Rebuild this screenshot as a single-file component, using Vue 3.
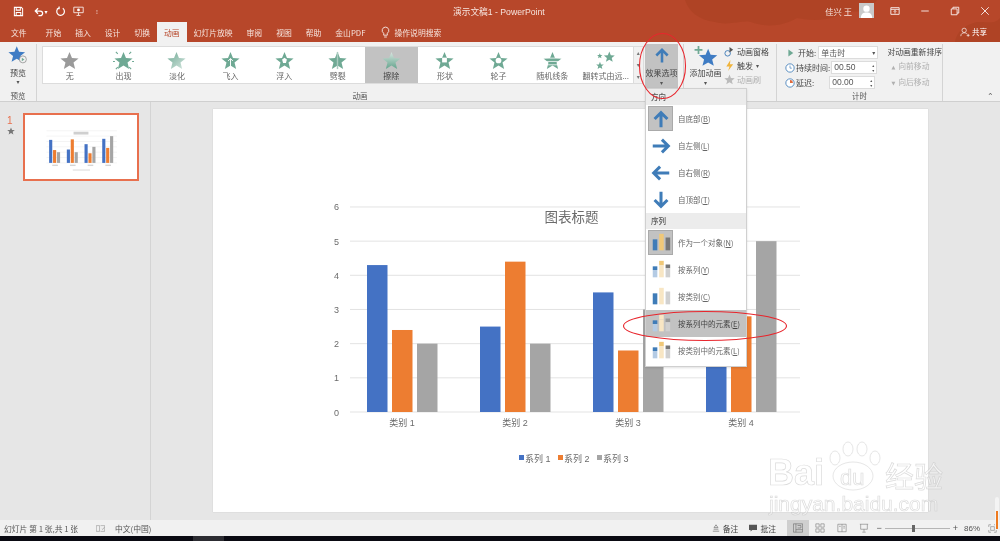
<script setup>
const starPts = '10,1 12.6,7.3 19.5,7.8 14.2,12.1 15.9,18.8 10,15.2 4.1,18.8 5.8,12.1 .5,7.8 7.4,7.3'

const tabs = ['文件', '开始', '插入', '设计', '切换', '动画', '幻灯片放映', '审阅', '视图', '帮助', '金山PDF']

const effects = [
  { name: '无', kind: 'none' },
  { name: '出现', kind: 'appear' },
  { name: '淡化', kind: 'fade' },
  { name: '飞入', kind: 'fly' },
  { name: '浮入', kind: 'float' },
  { name: '劈裂', kind: 'split' },
  { name: '擦除', kind: 'wipe', active: true },
  { name: '形状', kind: 'shape' },
  { name: '轮子', kind: 'wheel' },
  { name: '随机线条', kind: 'lines' },
  { name: '翻转式由远...', kind: 'flip' }
]

const directions = [
  { label: '自底部', key: 'B', path: 'M12 21V5M5 12l7-7 7 7', active: true },
  { label: '自左侧', key: 'L', path: 'M3 12h17M13 5l7 7-7 7' },
  { label: '自右侧', key: 'R', path: 'M21 12H4M11 5l-7 7 7 7' },
  { label: '自顶部', key: 'T', path: 'M12 3v16M5 12l7 7 7-7' }
]

const sequences = [
  { label: '作为一个对象', key: 'N', type: 'whole', active: true },
  { label: '按系列', key: 'Y', type: 'series' },
  { label: '按类别', key: 'C', type: 'category' },
  { label: '按系列中的元素', key: 'E', type: 'series', hover: true },
  { label: '按类别中的元素', key: 'L', type: 'series' }
]

// 图表数据
const colors = ['#4472c4', '#ed7d31', '#a5a5a5']
const series = [
  [4.3, 2.4, 2],
  [2.5, 4.4, 2],
  [3.5, 1.8, 3],
  [4.5, 2.8, 5]
]
const unit = 34.17
const baseY = 303
const grid = [0, 1, 2, 3, 4, 5, 6]

const groupX = (i) => 154 + i * 113
const barX = (i, j) => groupX(i) + j * 25
</script>

<template>
  <div class="app">
    <header class="title-bar">
      <svg class="pattern" viewBox="0 0 400 42" preserveAspectRatio="none">
        <path d="M85 0c4 12 14 20 30 22 14 4 26-2 36 0 16 6 32 4 46-4 20 4 38 2 50-8 12 4 24 0 30-10zM355 42c2-12 14-20 26-20 8 0 14 2 19-4v24z" fill="#a8401f" opacity=".5" />
      </svg>
      <div class="quick">
        <svg viewBox="0 0 12 12"><path d="M1.5 1.5h7.5l1.5 1.5v7.5h-9zM3.5 1.5v3h4.5v-3M3.5 10.5V7h5v3.5" fill="none" stroke="#fff" stroke-width="1.1" /></svg>
        <svg class="q-undo" viewBox="0 0 12 12"><path d="M3 5.5h5a2.5 2.5 0 0 1 0 5H6M5.500 2.500 2.500 5.500l3 3" fill="none" stroke="#fff" stroke-width="1.400" /></svg>
        <span class="caret q-caret">▾</span>
        <svg class="q-redo" viewBox="0 0 12 12"><path d="M8.500 2.500a4.200 4.200 0 1 1-4.500-.2M4.500 .5v2.500H2" fill="none" stroke="#fff" stroke-width="1.300" /></svg>
        <svg class="q-show" viewBox="0 0 14 14"><path d="M1 1.500h12v7H1zM7 8.500v3M4.500 12h5" fill="none" stroke="#fff" /><circle cx="7" cy="5" r="1.800" fill="#fff" /></svg>
        <span class="caret q-more">⁝</span>
      </div>
      <div class="doc-title">演示文稿1 - PowerPoint</div>
      <div class="win-right">
        <span class="user">佳兴 王</span>
        <span class="avatar">
          <svg viewBox="0 0 16 16"><circle cx="8" cy="6" r="3.400" fill="#fff" /><path d="M2 16c0-5 3-6 6-6s6 1 6 6z" fill="#fff" /></svg>
        </span>
        <div class="win-btns">
          <svg viewBox="0 0 12 12"><path d="M1 2h10v8H1zM1 4h10" fill="none" stroke="#fff" /><path d="M6 9V5.500M4.500 6.800 6 5.300l1.500 1.500" fill="none" stroke="#fff" /></svg>
          <svg viewBox="0 0 12 12"><path d="M1.500 6h9" stroke="#fff" /></svg>
          <svg viewBox="0 0 12 12"><path d="M1.500 3.500h7v7h-7zM3.500 3.500v-2h7v7h-2" fill="none" stroke="#fff" /></svg>
          <svg viewBox="0 0 12 12"><path d="M1.500 1.500l9 9M10.500 1.500l-9 9" stroke="#fff" /></svg>
        </div>
      </div>
    </header>

    <nav class="tab-bar">
      <span
        v-for="(tab, i) in tabs"
        :key="tab"
        class="tab"
        :class="{ active: tab === '动画', first: i === 0 }"
      >{{ tab }}</span>
      <span class="search">
        <svg viewBox="0 0 10 14"><path d="M5 1a3.700 3.700 0 0 0-2 6.800V10h4V7.800A3.700 3.700 0 0 0 5 1zM3.500 12h3" fill="none" stroke="#fff" stroke-width=".9" /></svg>
        操作说明搜索
      </span>
      <span class="share">
        <svg viewBox="0 0 12 12"><circle cx="5" cy="4" r="2.600" fill="none" stroke="#fff" stroke-width=".8" /><path d="M1 11c0-3 2-4 4-4s3 .5 3.500 1.500M8 10h3.500M9.800 8.300V11.700" fill="none" stroke="#fff" stroke-width=".8" /></svg>
        共享
      </span>
    </nav>

    <section class="ribbon">
      <svg width="0" height="0" class="defs">
        <defs>
          <linearGradient id="fadeGrad" x1="0" y1="0" x2="1" y2="1">
            <stop offset="0" stop-color="#6fa994" />
            <stop offset="1" stop-color="#d4e6df" />
          </linearGradient>
          <linearGradient id="wipeGrad" x1="0" y1="0" x2="0" y2="1">
            <stop offset="0" stop-color="#d8e6e0" />
            <stop offset="1" stop-color="#64a48d" />
          </linearGradient>
        </defs>
      </svg>

      <div class="group preview-group">
        <div class="group-body preview-btn">
          <svg viewBox="0 0 24 22" class="preview-star">
            <polygon :points="starPts" fill="#3f7cc4" />
            <circle cx="17" cy="16" r="4" fill="#f1f1f1" stroke="#777" stroke-width=".7" />
            <path d="M15.800 14v4l3-2z" fill="#6fa994" />
          </svg>
          <span>预览</span>
          <span class="caret dark">▾</span>
        </div>
        <div class="group-label">预览</div>
      </div>

      <div class="group anim-group">
        <div class="group-body anim-body">
          <div class="gallery">
            <div
              v-for="item in effects"
              :key="item.name"
              class="effect"
              :class="{ active: item.active }"
            >
              <svg viewBox="0 0 22 22">
                <polygon v-if="item.kind === 'none'" :points="starPts" fill="#9a9a9a" transform="translate(1 1)" />
                <polygon v-else-if="item.kind === 'fade'" :points="starPts" fill="url(#fadeGrad)" transform="translate(1 1)" />
                <polygon v-else-if="item.kind === 'wipe'" :points="starPts" fill="url(#wipeGrad)" transform="translate(1 1)" />
                <polygon v-else-if="item.kind !== 'flip'" :points="starPts" fill="#6fa994" transform="translate(1 1)" />

                <path v-if="item.kind === 'appear'" d="M3 2l2 2M19 2l-2 2M0 12h2M20 12h2M3 20l2-2M19 20l-2-2" stroke="#6fa994" stroke-width="1.200" />
                <path v-if="item.kind === 'fly'" d="M11 17V9M8.500 11.500 11 9l2.500 2.500M8 19h6" stroke="#fff" fill="none" />
                <polygon v-if="item.kind === 'float'" points="11,8 13.500,10 12.500,13.500 9.500,13.500 8.500,10" fill="#fff" />
                <path v-if="item.kind === 'split'" d="M11 2v18" stroke="#a9cbbf" stroke-width="1.500" />
                <rect v-if="item.kind === 'shape'" x="8.500" y="8" width="5" height="5" fill="#fff" />
                <circle v-if="item.kind === 'wheel'" cx="11" cy="11" r="3" fill="#fff" />
                <path v-if="item.kind === 'lines'" d="M0 8.500h22M0 12h22M0 15.500h22" stroke="#fff" stroke-width=".8" />
                <g v-if="item.kind === 'flip'" fill="#6fa994">
                  <polygon :points="starPts" transform="translate(9 1) scale(.6)" />
                  <polygon :points="starPts" transform="translate(1 12) scale(.42)" />
                  <polygon :points="starPts" transform="translate(2 3) scale(.3)" />
                </g>
              </svg>
              <span>{{ item.name }}</span>
            </div>
            <div class="gallery-scroll">
              <span>▴</span>
              <span>▾</span>
              <span>▾</span>
            </div>
          </div>
          <div class="effect-btn">
            <svg viewBox="0 0 24 24"><path d="M12 22V4M4 12l8-8 8 8" fill="none" stroke="#3f7cb8" stroke-width="3.600" /></svg>
            <span>效果选项</span>
            <span class="caret dark">▾</span>
          </div>
        </div>
        <div class="group-label">动画</div>
      </div>

      <div class="group adv-group">
        <div class="group-body adv-body">
          <div class="add-btn">
            <svg viewBox="0 0 28 24">
              <polygon :points="starPts" fill="#3f7cc4" transform="translate(6 2) scale(1.100)" />
              <path d="M6 0v9M1.500 4.500h9" stroke="#6fa994" stroke-width="2" />
            </svg>
            <span>添加动画</span>
            <span class="caret dark">▾</span>
          </div>
          <div class="adv-list">
            <div class="adv-row">
              <svg viewBox="0 0 12 12"><circle cx="4" cy="8" r="3" fill="none" stroke="#3f7cb8" /><path d="M6 1l4 3-4 3z" fill="#555" /></svg>
              动画窗格
            </div>
            <div class="adv-row">
              <svg viewBox="0 0 12 12"><path d="M7 0 2.500 7H6l-1.500 5L10 4.500H6.500z" fill="#f0b43c" /></svg>
              触发 <span class="caret dark inline">▾</span>
            </div>
            <div class="adv-row disabled">
              <svg viewBox="0 0 12 12"><polygon :points="starPts" fill="#bbb" transform="scale(.6)" /></svg>
              动画刷
            </div>
          </div>
        </div>
      </div>

      <div class="group timing-group">
        <div class="group-body timing-body">
          <div class="timing-col">
            <div class="timing-row">
              <svg class="ti" viewBox="0 0 10 10"><path d="M2 0v10l7-5z" fill="#6fa994" /></svg>
              <span>开始:</span>
              <span class="field wide">单击时 <i class="caret dark inline">▾</i></span>
            </div>
            <div class="timing-row">
              <svg class="ti clock" viewBox="0 0 12 12"><circle cx="6" cy="6" r="5" fill="#fff" stroke="#3f7cb8" /><path d="M6 3v3.200h2.200" fill="none" stroke="#3f7cb8" stroke-width=".8" /></svg>
              <span>持续时间:</span>
              <span class="field num">00.50<i class="spin">▴<br />▾</i></span>
            </div>
            <div class="timing-row">
              <svg class="ti clock" viewBox="0 0 12 12"><circle cx="6" cy="6" r="5" fill="#fff" stroke="#3f7cb8" /><path d="M6 6V2.500A3.500 3.500 0 0 1 9.500 6z" fill="#e0693c" /></svg>
              <span>延迟:</span>
              <span class="field num delay">00.00<i class="spin">▴<br />▾</i></span>
            </div>
          </div>
          <div class="order-col">
            <div>对动画重新排序</div>
            <div class="disabled"><i>▲</i>向前移动</div>
            <div class="disabled"><i>▼</i>向后移动</div>
          </div>
        </div>
        <div class="group-label">计时</div>
      </div>

      <span class="collapse">⌃</span>
    </section>

    <main class="workspace">
      <aside class="thumbs">
        <div class="thumb-index">
          <span>1</span>
          <svg viewBox="0 0 20 20"><polygon :points="starPts" fill="#777" /></svg>
        </div>
        <div class="thumb">
          <svg viewBox="0 0 715 403">
            <line v-for="g in grid" :key="g" x1="137" x2="587" :y1="baseY - g * unit" :y2="baseY - g * unit" stroke="#eeeeee" stroke-width="4" />
            <rect x="310" y="104" width="95" height="18" fill="#cfcfcf" />
            <g v-for="(vals, i) in series" :key="i">
              <rect
                v-for="(v, j) in vals"
                :key="j"
                :x="barX(i, j)"
                :y="baseY - v * unit"
                width="20"
                :height="v * unit"
                :fill="colors[j]"
              />
              <rect :x="groupX(i) + 20" y="314" width="36" height="9" fill="#d5d5d5" />
            </g>
            <rect x="305" y="345" width="110" height="7" fill="#dddddd" />
          </svg>
        </div>
      </aside>
      <div class="stage">
        <div class="slide">
          <svg viewBox="0 0 715 403">
            <g v-for="g in grid" :key="g">
              <line x1="137" x2="587" :y1="baseY - g * unit" :y2="baseY - g * unit" stroke="#dcdcdc" stroke-width=".8" />
              <text x="126" :y="baseY - g * unit + 3.500" class="axis" text-anchor="end">{{ g }}</text>
            </g>
            <text x="358.500" y="113" class="chart-title" text-anchor="middle">图表标题</text>
            <g v-for="(vals, i) in series" :key="i">
              <rect
                v-for="(v, j) in vals"
                :key="j"
                :x="barX(i, j)"
                :y="baseY - v * unit"
                width="20.500"
                :height="v * unit"
                :fill="colors[j]"
              />
              <text :x="groupX(i) + 35" y="317" class="axis" text-anchor="middle">类别 {{ i + 1 }}</text>
            </g>
            <g v-for="(c, j) in colors" :key="c">
              <rect :x="306 + j * 39" y="346" width="5" height="5" :fill="c" />
              <text :x="312 + j * 39" y="352.500" class="axis">系列 {{ j + 1 }}</text>
            </g>
          </svg>
        </div>
      </div>
    </main>

    <footer class="status-bar">
      <span class="slide-no">幻灯片 第 1 张,共 1 张</span>
      <svg class="check" viewBox="0 0 14 10"><path d="M.5.500h5v9h-5zM7 .500h6.500v9H7M9 5l1.500 1.500L13 3" fill="none" stroke="#777" stroke-width=".7" /></svg>
      <span>中文(中国)</span>
      <span class="spacer"></span>
      <span class="st-item">
        <svg viewBox="0 0 10 10"><path d="M1 9h8M2 6.500h6M5 1 2.500 4.500h5z" fill="none" stroke="#666" stroke-width=".8" /></svg>
        备注
      </span>
      <span class="st-item">
        <svg viewBox="0 0 10 10"><path d="M0 1h10v6.500H4L2 9.500v-2H0z" fill="#555" /></svg>
        批注
      </span>
      <span class="view active"><svg viewBox="0 0 12 12"><path d="M.500 1h11v10H.500zM3.500 1v10M3.500 8h8M5.500 3h4v3h-4" fill="none" stroke="#666" stroke-width=".7" /></svg></span>
      <span class="view"><svg viewBox="0 0 12 12"><path d="M1 1h4v4H1zM7 1h4v4H7zM1 7h4v4H1zM7 7h4v4H7z" fill="none" stroke="#777" stroke-width=".7" /></svg></span>
      <span class="view"><svg viewBox="0 0 12 12"><path d="M1 1.500h10v9H1zM6 1.500v9M2.500 4h2M7.500 4h2M7.500 6h2" fill="none" stroke="#777" stroke-width=".7" /></svg></span>
      <span class="view"><svg viewBox="0 0 12 12"><path d="M1 1.500h10M2 1.500v6h8v-6M6 7.500v3M4 11h4" fill="none" stroke="#777" stroke-width=".7" /></svg></span>
      <span class="zoom">
        <b>−</b>
        <span class="zoom-track"><i></i></span>
        <b>+</b>
      </span>
      <span class="pct">86%</span>
      <svg class="fit" viewBox="0 0 12 12"><path d="M1 4V1h3M8 1h3v3M11 8v3H8M4 11H1V8M3.500 3.500h5v5h-5z" fill="none" stroke="#777" stroke-width=".7" /></svg>
    </footer>
    <div class="taskbar">
      <span class="task-item"></span>
    </div>

    <!-- 效果选项下拉 -->
    <div class="menu">
      <div class="menu-head">方向</div>
      <div
        v-for="d in directions"
        :key="d.key"
        class="menu-item"
        :class="{ active: d.active }"
      >
        <span class="menu-icon">
          <svg viewBox="0 0 24 24"><path :d="d.path" fill="none" stroke="#3f7cb8" stroke-width="3.300" /></svg>
        </span>
        <span>{{ d.label }}(<u>{{ d.key }}</u>)</span>
      </div>
      <div class="menu-head">序列</div>
      <div
        v-for="s in sequences"
        :key="s.label"
        class="menu-item"
        :class="{ active: s.active, hover: s.hover }"
      >
        <span class="menu-icon">
          <svg viewBox="0 0 24 24">
            <template v-if="s.type === 'whole'">
              <rect x="3" y="8" width="5" height="12" fill="#3f7cb8" />
              <rect x="10" y="2" width="5" height="18" fill="#f0c878" />
              <rect x="17" y="6" width="5" height="14" fill="#777" />
            </template>
            <template v-else-if="s.type === 'category'">
              <rect x="3" y="8" width="5" height="12" fill="#3f7cb8" />
              <rect x="10" y="2" width="5" height="18" fill="#f8e6c4" />
              <rect x="17" y="6" width="5" height="14" fill="#d0d0d0" />
            </template>
            <template v-else>
              <rect x="3" y="8" width="5" height="4" fill="#3f7cb8" />
              <rect x="3" y="12" width="5" height="8" fill="#b4cbe4" />
              <rect x="10" y="2" width="5" height="5" :fill="s.hover ? '#f8e6c4' : '#f0c878'" />
              <rect x="10" y="7" width="5" height="13" fill="#f8e6c4" />
              <rect x="17" y="6" width="5" height="4" :fill="s.hover ? '#999' : '#777'" />
              <rect x="17" y="10" width="5" height="10" fill="#d0d0d0" />
            </template>
          </svg>
        </span>
        <span>{{ s.label }}(<u>{{ s.key }}</u>)</span>
      </div>
    </div>

    <!-- 红色标注 -->
    <svg class="marks" viewBox="0 0 1000 541">
      <ellipse cx="662.500" cy="66" rx="23" ry="32.500" fill="none" stroke="#e8262d" stroke-width="1.100" />
      <ellipse cx="705" cy="326" rx="81.500" ry="14.500" fill="none" stroke="#e8262d" stroke-width="1.100" />
    </svg>

    <!-- 水印 -->
    <svg class="watermark" viewBox="0 0 1000 541">
      <g fill="rgba(255,255,255,.55)" stroke="rgba(190,190,190,.55)" stroke-width=".7">
        <text x="768" y="485" class="wm-big">Bai</text>
        <ellipse cx="853" cy="476" rx="20" ry="14" />
        <ellipse cx="835" cy="458" rx="5" ry="7" />
        <ellipse cx="848" cy="449" rx="5" ry="7" />
        <ellipse cx="862" cy="449" rx="5" ry="7" />
        <ellipse cx="875" cy="458" rx="5" ry="7" />
        <text x="840" y="485" class="wm-du">du</text>
        <text x="885" y="488" class="wm-cn">经验</text>
        <text x="769" y="511" class="wm-url">jingyan.baidu.com</text>
      </g>
    </svg>

    <div class="side-scroll"><i></i></div>
  </div>
</template>

<style>
html,
body {
  margin: 0;
  background: #e6e6e6;
}
</style>

<style scoped>
.app {
  position: relative;
  width: 1000px;
  height: 541px;
  overflow: hidden;
  display: flex;
  flex-direction: column;
  background: #b7472a;
  font-family: "Noto Sans CJK SC", "Liberation Sans", sans-serif;
  font-size: 8px;
  color: #444;
  filter: blur(0.3px);
}

.title-bar {
  position: relative;
  flex: 0 0 22px;
  display: flex;
  align-items: center;
  color: #fff;
}

.pattern {
  position: absolute;
  left: 600px;
  top: 0;
  width: 400px;
  height: 42px;
}

.quick {
  position: relative;
  display: flex;
  align-items: center;
  padding-left: 13px;
  width: 420px;
  box-sizing: border-box;
}

.quick svg {
  width: 11px;
  height: 11px;
}

.q-undo {
  margin-left: 8.500px;
}

.q-caret {
  margin-left: 1px;
}

.q-redo {
  margin-left: 7.500px;
}

.q-show {
  margin-left: 7px;
}

.q-more {
  margin-left: 12px;
}

.caret {
  font-size: 6px;
  color: #fff;
  font-style: normal;
  font-family: "DejaVu Sans", sans-serif;
}

.caret.dark {
  color: #555;
}

.doc-title {
  position: relative;
  margin-left: 33px;
  font-size: 8.700px;
  font-family: "Liberation Sans", "Noto Sans CJK SC", sans-serif;
  color: #f6e4de;
}

.win-right {
  position: relative;
  margin-left: auto;
  display: flex;
  align-items: center;
  height: 100%;
}

.user {
  font-size: 8.300px;
  color: #f6e4de;
  margin-right: 7px;
}

.avatar {
  width: 15px;
  height: 15px;
  margin-bottom: 2px;
  background: #c9c9c9;
  display: block;
  overflow: hidden;
}

.avatar svg {
  display: block;
}

.win-btns {
  display: flex;
  gap: 20px;
  margin-left: 16px;
  margin-right: 10px;
}

.win-btns svg {
  width: 10px;
  height: 10px;
}

.tab-bar {
  position: relative;
  flex: 0 0 20px;
  display: flex;
  align-items: stretch;
  color: #f6e4de;
}

.tab {
  display: flex;
  align-items: center;
  padding: 0 7px;
  font-size: 7.800px;
  white-space: nowrap;
}

.tab.first {
  padding: 0 10px 0 11px;
  margin-right: 2px;
}

.tab.active {
  background: #f1f1f1;
  color: #b7472a;
}

.search {
  display: flex;
  align-items: center;
  gap: 5px;
  margin-left: 8px;
  font-size: 7.800px;
}

.search svg {
  width: 9px;
  height: 13px;
}

.share {
  position: absolute;
  left: 960px;
  top: 4px;
  display: flex;
  align-items: center;
  gap: 2px;
  font-size: 7.500px;
  color: #fff;
}

.share svg {
  width: 10px;
  height: 10px;
}

.ribbon {
  position: relative;
  flex: 0 0 60px;
  min-height: 0;
  box-sizing: border-box;
  background: #f1f1f1;
  border-bottom: 1px solid #cfcfcf;
  display: flex;
}

.defs {
  position: absolute;
}

.group {
  display: flex;
  flex-direction: column;
  border-right: 1px solid #d4d4d4;
  margin-top: 2px;
  min-height: 0;
  box-sizing: border-box;
}

.group-body {
  flex: 1;
  display: flex;
  min-height: 0;
}

.group-label {
  flex: none;
  height: 11px;
  line-height: 11px;
  text-align: center;
  font-size: 7.500px;
  color: #555;
}

.preview-group {
  width: 37px;
}

.preview-btn {
  flex-direction: column;
  align-items: center;
  line-height: 9px;
}

.preview-star {
  width: 21px;
  height: 20px;
  margin-top: 1px;
  margin-bottom: 3px;
}

.preview-btn .caret {
  line-height: 10px;
}

.anim-group {
  width: 647px;
}

.anim-body {
  padding-left: 5px;
}

.gallery {
  width: 602px;
  height: 38px;
  margin-top: 2px;
  background: #fff;
  border: 1px solid #dcdcdc;
  box-sizing: border-box;
  display: flex;
}

.effect {
  width: 53.600px;
  flex: none;
  display: flex;
  flex-direction: column;
  align-items: center;
  line-height: 10px;
  color: #666;
  white-space: nowrap;
}

.effect.active {
  background: #c2c2c2;
  color: #444;
}

.effect svg {
  width: 21px;
  height: 21px;
  margin-top: 3px;
}

.gallery-scroll {
  flex: 1;
  display: flex;
  flex-direction: column;
  background: #f1f1f1;
  border-left: 1px solid #dcdcdc;
  font-size: 6px;
  font-family: "DejaVu Sans", sans-serif;
  text-align: center;
  color: #777;
}

.gallery-scroll span {
  flex: 1;
  line-height: 12px;
}

.effect-btn {
  width: 33px;
  height: 44px;
  margin-left: 1px;
  background: #c2c2c2;
  display: flex;
  flex-direction: column;
  align-items: center;
  line-height: 10px;
  color: #444;
  white-space: nowrap;
}

.effect-btn svg {
  width: 18px;
  height: 18px;
  margin-top: 3px;
  margin-bottom: 4px;
}

.adv-group {
  width: 93px;
}

.adv-body {
  padding-left: 5px;
}

.add-btn {
  display: flex;
  flex-direction: column;
  align-items: center;
  width: 33px;
  flex: none;
  line-height: 10px;
  white-space: nowrap;
}

.add-btn svg {
  width: 25px;
  height: 21px;
  margin-top: 2px;
  margin-bottom: 1px;
}

.adv-list {
  margin-left: 2px;
  display: flex;
  flex-direction: column;
  gap: 3px;
  padding-top: 2px;
}

.adv-row {
  display: flex;
  align-items: center;
  gap: 2px;
  height: 11px;
  white-space: nowrap;
}

.adv-row svg {
  width: 11px;
  height: 11px;
}

.disabled {
  color: #b0b0b0;
}

.caret.inline {
  margin-left: 1px;
}

.timing-group {
  width: 166px;
}

.timing-body {
  padding: 2px 0 0 9px;
}

.timing-col {
  width: 98px;
  display: flex;
  flex-direction: column;
  gap: 2px;
}

.timing-row {
  display: flex;
  align-items: center;
  height: 13px;
  white-space: nowrap;
}

.ti {
  width: 7px;
  height: 8px;
  margin-right: 4px;
  margin-left: 1px;
}

.ti.clock {
  width: 10px;
  height: 10px;
  margin: 0 1px 0 -1px;
}

.field {
  background: #fff;
  border: 1px solid #dcdcdc;
  height: 13px;
  box-sizing: border-box;
  line-height: 11px;
  display: flex;
  align-items: center;
  justify-content: space-between;
  padding: 0 2px;
  color: #555;
}

.field.wide {
  width: 60px;
  margin-left: 2px;
}

.field.num {
  width: 46px;
  margin-left: 1px;
  font-size: 8.500px;
  font-family: "Liberation Sans", sans-serif;
}

.field.delay {
  margin-left: 15px;
  width: 46px;
}

.spin {
  font-style: normal;
  font-size: 4px;
  line-height: 5px;
  text-align: center;
  font-family: "DejaVu Sans", sans-serif;
}

.order-col {
  margin-left: 4px;
  display: flex;
  flex-direction: column;
  gap: 3px;
  line-height: 11px;
  white-space: nowrap;
  font-size: 7.800px;
}

.order-col div:not(:first-child) {
  padding-left: 4px;
}

.order-col i {
  font-style: normal;
  font-size: 5px;
  margin-right: 3px;
  font-family: "DejaVu Sans", sans-serif;
}

.collapse {
  position: absolute;
  left: 987px;
  top: 50px;
  font-size: 8px;
  color: #666;
  font-family: "DejaVu Sans", sans-serif;
}

.workspace {
  flex: 1;
  display: flex;
  background: #e6e6e6;
  min-height: 0;
}

.thumbs {
  width: 151px;
  flex: none;
  box-sizing: border-box;
  border-right: 1px solid #d4d4d4;
  display: flex;
  align-items: flex-start;
  padding: 11px 0 0 7px;
}

.thumb-index {
  width: 16px;
  display: flex;
  flex-direction: column;
  font-size: 10px;
  line-height: 12px;
  color: #e8704e;
  padding-top: 2px;
  font-family: "Liberation Sans", sans-serif;
}

.thumb-index svg {
  width: 8px;
  height: 8px;
  margin-left: 0;
}

.thumb {
  width: 116px;
  height: 68px;
  background: #fff;
  border: 2px solid #e8704e;
  box-sizing: border-box;
}

.thumb svg {
  display: block;
  width: 100%;
  height: 100%;
}

.stage {
  flex: 1;
  padding: 7px 0 0 62px;
}

.slide {
  width: 715px;
  height: 403px;
  background: #fff;
  box-shadow: 0 0 1px #bdbdbd;
}

.slide svg {
  display: block;
  width: 100%;
  height: 100%;
}

.axis {
  font-size: 9px;
  fill: #6b6b6b;
  font-family: "Liberation Sans", "Noto Sans CJK SC", sans-serif;
}

.chart-title {
  font-size: 13.500px;
  fill: #6b6b6b;
}

.status-bar {
  flex: 0 0 16px;
  background: #f1f1f1;
  display: flex;
  align-items: center;
  padding-left: 4px;
  color: #555;
  font-size: 7.800px;
  white-space: nowrap;
}

.slide-no {
  width: 92px;
}

.check {
  width: 9px;
  height: 7px;
  margin-right: 10px;
}

.spacer {
  flex: 1;
}

.st-item {
  display: flex;
  align-items: center;
  gap: 3px;
  margin-right: 11px;
  color: #444;
}

.st-item svg {
  width: 8px;
  height: 8px;
}

.view {
  width: 22px;
  height: 16px;
  display: flex;
  align-items: center;
  justify-content: center;
}

.view svg {
  width: 10px;
  height: 10px;
}

.view.active {
  background: #cfcfcf;
}

.zoom {
  display: flex;
  align-items: center;
  gap: 3px;
  margin-left: 1.500px;
}

.zoom b {
  font-weight: 400;
  font-size: 9px;
  font-family: "Liberation Sans", sans-serif;
}

.zoom-track {
  position: relative;
  display: block;
  width: 65px;
  height: 1px;
  background: #b5b5b5;
}

.zoom-track i {
  position: absolute;
  left: 27px;
  top: -3px;
  width: 3px;
  height: 7px;
  background: #666;
}

.pct {
  margin-left: 6px;
  width: 22px;
  font-size: 8px;
  font-family: "Liberation Sans", sans-serif;
}

.fit {
  width: 9px;
  height: 9px;
  margin: 0 3px 0 2px;
}

.taskbar {
  flex: 0 0 5px;
  background: #0a0a12;
  position: relative;
}

.task-item {
  position: absolute;
  left: 193px;
  top: 0;
  width: 31px;
  height: 5px;
  background: #2c2c32;
}

.menu {
  position: absolute;
  left: 645px;
  top: 88px;
  width: 102px;
  height: 279px;
  box-sizing: border-box;
  background: #fff;
  border: 1px solid #d0d0d0;
  box-shadow: 0 1px 2px rgba(0, 0, 0, 0.12);
  color: #666;
  font-size: 7.500px;
}

.menu-head {
  height: 16px;
  line-height: 16px;
  padding-left: 5px;
  background: #ececec;
  font-weight: 500;
  color: #555;
}

.menu-item {
  height: 27px;
  display: flex;
  align-items: center;
  white-space: nowrap;
}

.menu-item.hover {
  background: #c2c2c2;
  color: #444;
}

.menu-icon {
  width: 25px;
  height: 25px;
  margin-left: 2px;
  margin-right: 5px;
  display: flex;
  align-items: center;
  justify-content: center;
  box-sizing: border-box;
}

.menu-item.active .menu-icon {
  background: #c2c2c2;
  border: 1px solid #aaa;
}

.menu-icon svg {
  width: 22px;
  height: 22px;
}

.marks,
.watermark {
  position: absolute;
  left: 0;
  top: 0;
  width: 1000px;
  height: 541px;
  pointer-events: none;
}

.wm-big {
  font-family: "Liberation Sans", sans-serif;
  font-size: 36px;
  font-weight: 700;
}

.wm-du {
  font-family: "Liberation Sans", sans-serif;
  font-size: 22px;
}

.wm-cn {
  font-family: "Noto Sans CJK SC", sans-serif;
  font-size: 29px;
}

.wm-url {
  font-family: "Liberation Sans", sans-serif;
  font-size: 21px;
}

.side-scroll {
  position: absolute;
  left: 995px;
  top: 497px;
  width: 4px;
  height: 32px;
  background: #f4f4f4;
  border-radius: 2px;
  display: flex;
  align-items: flex-end;
  justify-content: center;
}

.side-scroll i {
  width: 2px;
  height: 18px;
  background: #ee7a1f;
}
</style>
